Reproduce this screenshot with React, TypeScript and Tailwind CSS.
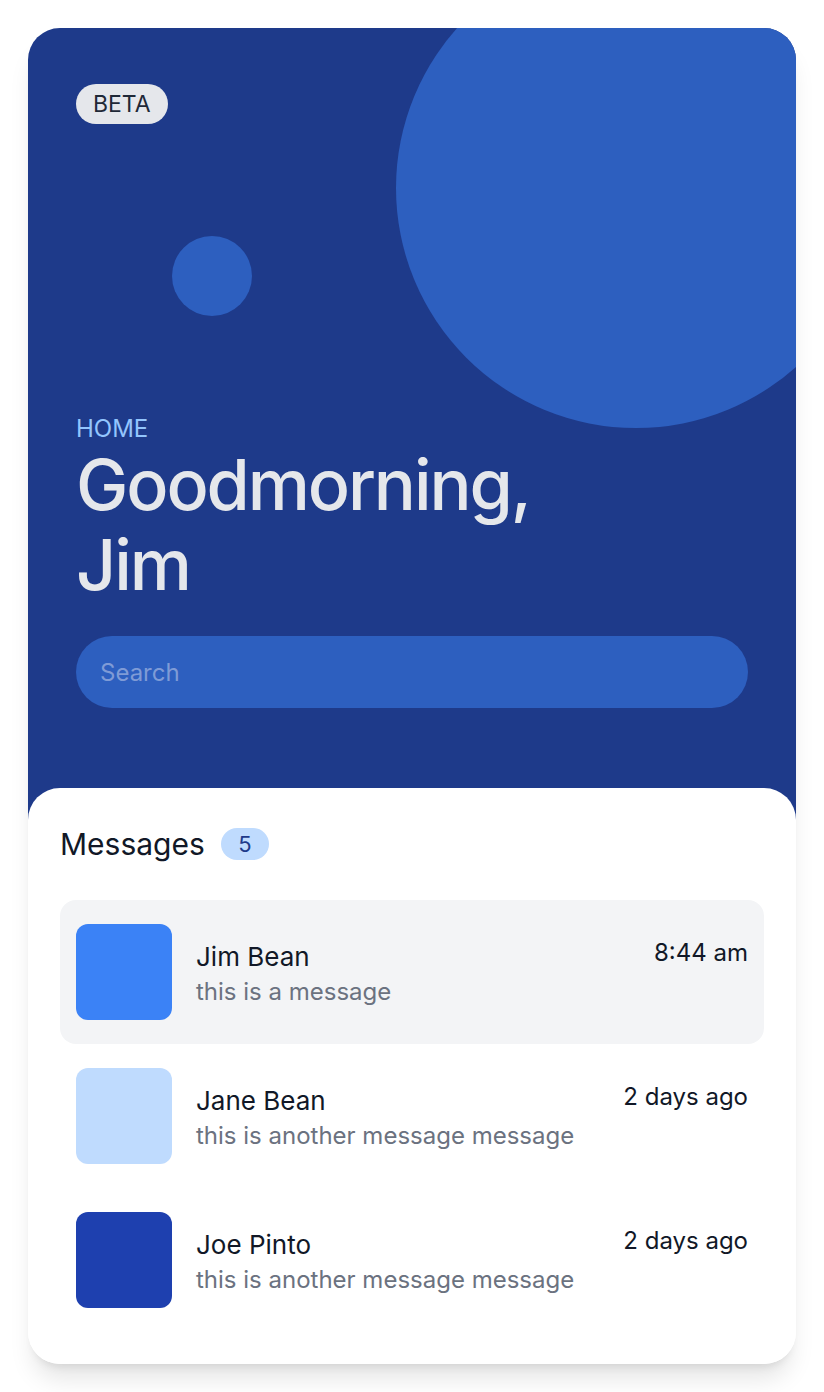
import React from 'react';

interface Message {
  name: string;
  text: string;
  time: string;
  color: string;
  active?: boolean;
}

const messages: Message[] = [
  { name: 'Jim Bean', text: 'this is a message', time: '8:44 am', color: 'bg-[#3b82f6]', active: true },
  { name: 'Jane Bean', text: 'this is another message message', time: '2 days ago', color: 'bg-[#bfdbfe]' },
  { name: 'Joe Pinto', text: 'this is another message message', time: '2 days ago', color: 'bg-[#1e40af]' },
];

function MessageRow({ message }: { message: Message }) {
  return (
    <li
      className={`flex items-center gap-6 rounded-2xl px-4 py-6 ${
        message.active ? 'bg-[#f3f4f6]' : ''
      }`}
    >
      <div className={`h-24 w-24 shrink-0 rounded-xl ${message.color}`} />
      <div className="flex min-w-0 flex-1 flex-col pt-1">
        <div className="flex items-start justify-between">
          <span className="text-[26px] leading-8 text-[#111827]">{message.name}</span>
          <span className="text-2xl leading-6 text-[#111827]">{message.time}</span>
        </div>
        <span className="mt-[3px] text-2xl leading-8 text-[#6b7280]">{message.text}</span>
      </div>
    </li>
  );
}

export default function App() {
  return (
    <div
      className="min-h-screen bg-white p-7"
      style={{ fontFamily: 'Inter, "Noto Sans", sans-serif' }}
    >
      <div className="overflow-hidden rounded-[32px] bg-white shadow-xl">
        {/* Header */}
        <div className="relative overflow-hidden bg-[#1e3a8a] px-12 pt-14 pb-[112px]">
          <div className="absolute top-[-80px] left-[368px] h-[480px] w-[480px] rounded-full bg-[#2d5fbf]" />
          <div className="absolute top-[208px] left-[144px] h-20 w-20 rounded-full bg-[#2d5fbf]" />

          <div className="relative">
            <span className="inline-flex h-10 items-center rounded-full bg-[#e5e7eb] px-[17px] text-[23px] text-[#1f2937]">
              BETA
            </span>
            <p className="mt-[289px] text-2xl leading-8 text-[#93c5fd]">HOME</p>
            <h1 className="text-[70px] leading-[80px] font-medium tracking-[-0.03em] text-[#e5e7eb]">
              Goodmorning,
              <br />
              Jim
            </h1>
            <input
              type="text"
              placeholder="Search"
              className="mt-[31px] h-[72px] w-full rounded-full bg-[#2d5fbf] px-6 text-2xl text-gray-100 outline-none placeholder:text-[#7f9bd6]"
            />
          </div>
        </div>

        {/* Messages */}
        <div className="relative -mt-8 rounded-t-[32px] bg-white px-8 pt-[38px] pb-8">
          <div className="mb-[38px] flex items-center gap-4">
            <h2 className="text-3xl leading-9 text-[#111827]">Messages</h2>
            <span className="inline-flex h-8 w-12 items-center justify-center rounded-full bg-[#bfdbfe] text-[22px] text-[#1e3a8a]">
              5
            </span>
          </div>
          <ul>
            {messages.map(m => (
              <MessageRow key={m.name} message={m} />
            ))}
          </ul>
        </div>
      </div>
    </div>
  );
}
